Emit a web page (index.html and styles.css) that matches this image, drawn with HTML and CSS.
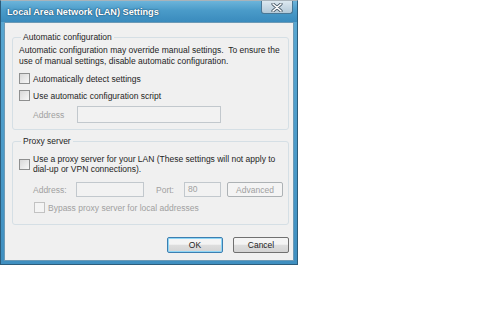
FILE: index.html
```html
<!DOCTYPE html>
<html>
<head>
  <meta charset="UTF-8">
  <meta name="viewport" content="width=device-width, initial-scale=1">
  <title>Local Area Network (LAN) Settings</title>
  <link rel="stylesheet" href="styles.css">
</head>
<body>
  <div class="window">
    <div class="titlebar">
      <span class="title">Local Area Network (LAN) Settings</span>
      <span class="close">
        <svg width="12" height="9" viewBox="0 0 12 9">
          <path d="M2 1 L10 8 M10 1 L2 8" stroke="#4a5c6a" stroke-width="3.2" stroke-linecap="round"/>
          <path d="M2 1 L10 8 M10 1 L2 8" stroke="#fff" stroke-width="1.6" stroke-linecap="round"/>
        </svg>
      </span>
    </div>
    <div class="client">
      <fieldset class="group auto">
        <legend>Automatic configuration</legend>
        <p class="desc">Automatic configuration may override manual settings.&nbsp; To ensure the<br>use of manual settings, disable automatic configuration.</p>
        <div class="row"><span class="check"></span>Automatically detect settings</div>
        <div class="row"><span class="check"></span>Use automatic configuration script</div>
        <div class="row addr">
          <span class="lbl disabled">Address</span>
          <span class="input wide"></span>
        </div>
      </fieldset>

      <fieldset class="group proxy">
        <legend>Proxy server</legend>
        <div class="row two">
          <span class="check"></span>
          <span>Use a proxy server for your LAN (These settings will not apply to<br>dial-up or VPN connections).</span>
        </div>
        <div class="row fields">
          <span class="lbl disabled">Address:</span>
          <span class="input small"></span>
          <span class="port disabled">Port:</span>
          <span class="input port-box">80</span>
          <span class="btn adv">Advanced</span>
        </div>
        <div class="row bypass disabled"><span class="check off"></span>Bypass proxy server for local addresses</div>
      </fieldset>

      <div class="actions">
        <span class="btn default">OK</span>
        <span class="btn">Cancel</span>
      </div>
    </div>
  </div>
</body>
</html>
```

FILE: styles.css
```css
body {
  margin: 0;
  padding: 0;
  background-color: #fff;
  font-family: "Liberation Sans", Arial, sans-serif;
  font-size: 8.5px;
  color: #1e1e1e;
}

.window {
  width: 298px;
  border: 1px solid #2c5d7c;
  border-top-color: #a9b3ba;
  background: linear-gradient(#5aa8d2, #3f8fc0);
  padding: 0 3px 3px 3px;
  box-sizing: border-box;
}

.titlebar {
  height: 21px;
  display: flex;
  justify-content: space-between;
  align-items: flex-start;
  background: linear-gradient(#6cb4da, #4a9bc9 45%, #3a8bbd);
  margin: 0 -3px;
  padding: 0 3px 0 6px;
}

.title {
  color: #fff;
  font-weight: bold;
  font-size: 9.2px;
  line-height: 22px;
  text-shadow: 0 0 2px #1d4f70, 0 0 1px #1d4f70;
}

.close {
  width: 30px;
  height: 12px;
  margin-right: 1px;
  border: 1px solid #4a7896;
  border-top: none;
  border-radius: 0 0 3px 3px;
  background: linear-gradient(#dce8f0, #b3c9d8);
  display: flex;
  align-items: center;
  justify-content: center;
}

.client {
  background-color: #f0f0f0;
  border: 1px solid #6c9ab6;
  padding: 9px 4px 7px 7px;
  display: flex;
  flex-direction: column;
}

.group {
  margin: 0;
  border: 1px solid #d5dfe5;
  border-radius: 3px;
  padding: 3px 5px 6px 6px;
}

legend {
  padding: 0 2px;
  margin-left: 2px;
  line-height: 10px;
}

.desc {
  margin: 0 0 3px 0;
  line-height: 11px;
  white-space: nowrap;
}

.row {
  display: flex;
  align-items: center;
  height: 17px;
  white-space: nowrap;
}

.check {
  width: 9px;
  height: 9px;
  border: 1px solid #8e8f8f;
  background: linear-gradient(135deg, #d8d8d8, #f8f8f8);
  margin-right: 3px;
  flex: none;
}

.check.off {
  border-color: #c2c2c2;
  background: #f4f4f4;
}

.disabled {
  color: #a0a0a0;
}

.addr {
  margin-top: 2px;
  padding-left: 14px;
}

.lbl {
  width: 44px;
  flex: none;
}

.input {
  height: 13px;
  border: 1px solid #c2c8cd;
  background-color: #f2f2f2;
  flex: none;
  color: #a0a0a0;
  line-height: 13px;
  padding-left: 3px;
  box-sizing: content-box;
}

.input.wide {
  width: 139px;
  height: 15px;
}

.proxy {
  margin-top: 6px;
  padding-bottom: 11px;
}

.row.two {
  height: 20px;
  margin-top: 5px;
  line-height: 10px;
}

.fields {
  margin-top: 8px;
  height: 15px;
  padding-left: 14px;
}

.fields .lbl {
  width: 43px;
}

.input.small {
  width: 63px;
}

.port {
  margin-left: 12px;
  width: 28px;
}

.input.port-box {
  width: 32px;
}

.btn {
  width: 56px;
  height: 16px;
  box-sizing: border-box;
  border: 1px solid #707070;
  border-radius: 2px;
  background: linear-gradient(#f4f4f4 45%, #dedede 50%, #d3d3d3);
  display: flex;
  align-items: center;
  justify-content: center;
}

.btn.adv {
  margin-left: 6px;
  height: 15px;
  border-color: #adb2b5;
  background: #f4f4f4;
  color: #a0a0a0;
}

.bypass {
  margin-top: 5px;
  height: 11px;
  padding-left: 15px;
}

.actions {
  display: flex;
  justify-content: flex-end;
  gap: 10px;
  margin-top: 12px;
}

.btn.default {
  border-color: #3c7fb1;
  box-shadow: inset 0 0 0 1px #8fd6f6;
}
```
